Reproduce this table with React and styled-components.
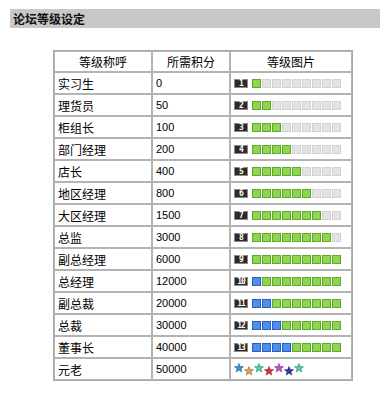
import React from "react";
import styled, { createGlobalStyle } from "styled-components";

const GlobalStyle = createGlobalStyle`
  html, body {
    margin: 0;
    padding: 0;
    background: #fff;
  }
  body {
    font-family: "Liberation Sans", "Noto Sans CJK SC", sans-serif;
    font-size: 12px;
    color: #000;
  }
`;

const Page = styled.div`
  padding: 9px 11px 0 10px;
`;

const TitleBar = styled.div`
  height: 19px;
  background: #c8c8c8;
  display: flex;
  align-items: center;
  padding-left: 3px;
  font-family: "Noto Sans CJK SC", sans-serif;
  font-size: 12px;
  font-weight: bold;
  color: #111;
`;

const Table = styled.table`
  margin: 22px 0 0 43px;
  width: 300px;
  box-sizing: border-box;
  table-layout: fixed;
  border-collapse: separate;
  border-spacing: 0;
  border: 1px solid #a8a8a8;
`;

const Th = styled.th`
  box-sizing: border-box;
  width: ${(p) => p.$w}px;
  height: 21px;
  padding: 0;
  border: 1px solid #b4b4b4;
  font-family: "Noto Sans CJK SC", sans-serif;
  font-size: 12px;
  font-weight: normal;
  text-align: center;
  color: #000;
`;

const Td = styled.td`
  box-sizing: border-box;
  height: 22px;
  padding: 0 0 0 3px;
  border: 1px solid #b4b4b4;
  font-family: ${(p) =>
    p.$num ? '"Liberation Sans", sans-serif' : '"Noto Sans CJK SC", sans-serif'};
  font-size: ${(p) => (p.$num ? "11px" : "12px")};
  text-align: left;
  vertical-align: middle;
  white-space: nowrap;
`;

const LevelBar = styled.div`
  display: flex;
  align-items: center;
  gap: 1px;
`;

const Badge = styled.span`
  box-sizing: border-box;
  width: 14px;
  height: 9px;
  margin-right: 3px;
  background: #2b2b2b;
  border: 1px solid #8a8a8a;
  color: #fff;
  font-family: "DejaVu Sans Mono", monospace;
  font-weight: bold;
  font-size: 8px;
  line-height: 7px;
  text-align: center;
  letter-spacing: -1px;
`;

const tones = {
  green: { bg: "#8fd650", bd: "#5ea82a" },
  blue: { bg: "#4d90ec", bd: "#2a5fbf" },
  gray: { bg: "#e3e3e3", bd: "#d2d2d2" },
};

const Cell = styled.span`
  box-sizing: border-box;
  width: 9px;
  height: 9px;
  background: ${(p) => tones[p.$tone].bg};
  border: 1px solid ${(p) => tones[p.$tone].bd};
`;

const Stars = styled.div`
  display: flex;
  align-items: center;
  height: 14px;
`;

const StarIcon = styled.svg`
  width: 10px;
  height: 10px;
  transform: translateY(${(p) => (p.$low ? 2 : -1)}px);
`;

const starColors = [
  ["#3a93c8", "#1d5f8a"],
  ["#d8a55c", "#9a6a26"],
  ["#4fcfae", "#238a70"],
  ["#d0344a", "#8a1424"],
  ["#c84ccf", "#862a8c"],
  ["#3538a8", "#1a1c6a"],
  ["#4fcfae", "#238a70"],
];

const levels = [
  ["实习生", 0],
  ["理货员", 50],
  ["柜组长", 100],
  ["部门经理", 200],
  ["店长", 400],
  ["地区经理", 800],
  ["大区经理", 1500],
  ["总监", 3000],
  ["副总经理", 6000],
  ["总经理", 12000],
  ["副总裁", 20000],
  ["总裁", 30000],
  ["董事长", 40000],
  ["元老", 50000],
];

function Level({ n }) {
  const cells = [];
  for (let i = 0; i < 9; i++) {
    let tone = "gray";
    if (n <= 9) tone = i < n ? "green" : "gray";
    else tone = i < n - 9 ? "blue" : "green";
    cells.push(<Cell key={i} $tone={tone} />);
  }
  return (
    <LevelBar>
      <Badge>{n}</Badge>
      {cells}
    </LevelBar>
  );
}

function StarRow() {
  return (
    <Stars>
      {starColors.map(([fill, stroke], i) => (
        <StarIcon key={i} viewBox="0 0 20 20" $low={i % 2 === 1}>
          <path
            d="M10 1 L12.4 7.2 L19 7.4 L13.8 11.5 L15.6 18 L10 14.2 L4.4 18 L6.2 11.5 L1 7.4 L7.6 7.2 Z"
            fill={fill}
            stroke={stroke}
            strokeWidth="1.2"
            strokeLinejoin="round"
          />
        </StarIcon>
      ))}
    </Stars>
  );
}

export default function App() {
  return (
    <>
      <GlobalStyle />
      <Page>
        <TitleBar>论坛等级设定</TitleBar>
        <Table>
          <thead>
            <tr>
              <Th $w={98}>等级称呼</Th>
              <Th $w={78}>所需积分</Th>
              <Th $w={122}>等级图片</Th>
            </tr>
          </thead>
          <tbody>
            {levels.map(([name, pts], i) => (
              <tr key={name}>
                <Td>{name}</Td>
                <Td $num>{pts}</Td>
                <Td>{i < 13 ? <Level n={i + 1} /> : <StarRow />}</Td>
              </tr>
            ))}
          </tbody>
        </Table>
      </Page>
    </>
  );
}
